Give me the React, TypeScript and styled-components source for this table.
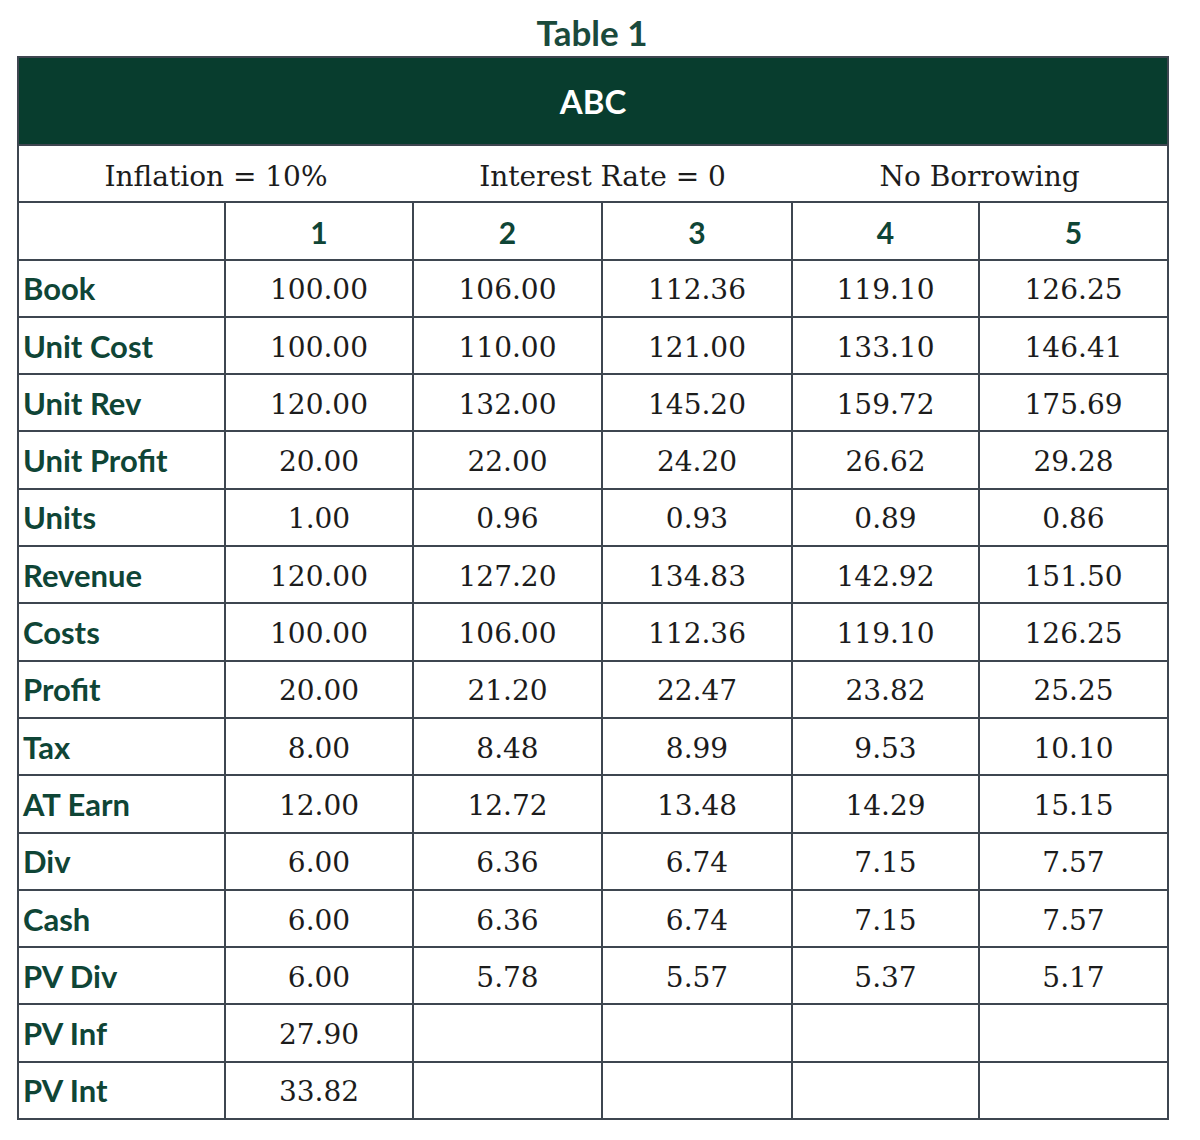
import React from "react";
import styled, { createGlobalStyle } from "styled-components";

const Global = createGlobalStyle`
  html, body { margin: 0; padding: 0; background: #ffffff; }
  body { font-family: "Lato", "Open Sans", sans-serif; }
`;

const Page = styled.div`
  width: 1200px;
  padding-left: 17px;
  box-sizing: border-box;
`;

const Frame = styled.div`
  width: 1150px;
`;

const Title = styled.div`
  height: 40px;
  padding-top: 12px;
  margin-bottom: 4px;
  text-align: center;
  font-family: "Lato", sans-serif;
  font-weight: 700;
  font-size: 35px;
  line-height: 40px;
  color: #1a4a3c;
`;

const Grid = styled.table`
  width: 1150px;
  border-collapse: collapse;
  table-layout: fixed;
  border: 2px solid #3e4650;
`;

const Col = styled.col<{ $w: number }>`
  width: ${(p) => p.$w}px;
`;

const BannerCell = styled.th`
  height: 86px;
  padding: 0;
  background: #083d2e;
  color: #ffffff;
  font-family: "Lato", sans-serif;
  font-weight: 700;
  font-size: 33px;
  text-align: center;
  vertical-align: middle;
  border: 2px solid #3e4650;
`;

const Row = styled.tr`
  height: 57.3px;
`;

const NoteCell = styled.td`
  padding: 5px 0 0;
  font-family: "DejaVu Serif", serif;
  font-size: 28px;
  color: #1c1c1c;
  text-align: center;
  vertical-align: middle;
  border-top: 2px solid #3e4650;
  border-bottom: 2px solid #3e4650;
`;

const HeadCell = styled.td`
  padding: 2px 0 0;
  font-family: "Lato", sans-serif;
  font-weight: 700;
  font-size: 30px;
  color: #0f4536;
  text-align: center;
  vertical-align: middle;
  border: 2px solid #3e4650;
`;

const LabelCell = styled.td`
  padding: 0 0 0 4px;
  font-family: "Lato", sans-serif;
  font-weight: 700;
  font-size: 31px;
  color: #0f4536;
  text-align: left;
  vertical-align: middle;
  white-space: nowrap;
  border: 2px solid #3e4650;
`;

const ValueCell = styled.td`
  padding: 3px 0 0;
  font-family: "DejaVu Serif", serif;
  font-size: 28px;
  color: #1c1c1c;
  text-align: center;
  vertical-align: middle;
  border: 2px solid #3e4650;
`;

const rows: [string, string[]][] = [
  ["Book", ["100.00", "106.00", "112.36", "119.10", "126.25"]],
  ["Unit Cost", ["100.00", "110.00", "121.00", "133.10", "146.41"]],
  ["Unit Rev", ["120.00", "132.00", "145.20", "159.72", "175.69"]],
  ["Unit Profit", ["20.00", "22.00", "24.20", "26.62", "29.28"]],
  ["Units", ["1.00", "0.96", "0.93", "0.89", "0.86"]],
  ["Revenue", ["120.00", "127.20", "134.83", "142.92", "151.50"]],
  ["Costs", ["100.00", "106.00", "112.36", "119.10", "126.25"]],
  ["Profit", ["20.00", "21.20", "22.47", "23.82", "25.25"]],
  ["Tax", ["8.00", "8.48", "8.99", "9.53", "10.10"]],
  ["AT Earn", ["12.00", "12.72", "13.48", "14.29", "15.15"]],
  ["Div", ["6.00", "6.36", "6.74", "7.15", "7.57"]],
  ["Cash", ["6.00", "6.36", "6.74", "7.15", "7.57"]],
  ["PV Div", ["6.00", "5.78", "5.57", "5.37", "5.17"]],
  ["PV Inf", ["27.90", "", "", "", ""]],
  ["PV Int", ["33.82", "", "", "", ""]],
];

const widths = [207, 188, 189, 190, 187, 189];

export default function App() {
  return (
    <Page>
      <Global />
      <Frame>
        <Title>Table 1</Title>
        <Grid>
          <colgroup>
            {widths.map((w, i) => (
              <Col key={i} $w={w} />
            ))}
          </colgroup>
          <thead>
            <tr>
              <BannerCell colSpan={6}>ABC</BannerCell>
            </tr>
          </thead>
          <tbody>
            <Row>
              <NoteCell colSpan={2}>Inflation = 10%</NoteCell>
              <NoteCell colSpan={2}>Interest Rate = 0</NoteCell>
              <NoteCell colSpan={2}>No Borrowing</NoteCell>
            </Row>
            <Row>
              <HeadCell />
              {[1, 2, 3, 4, 5].map((n) => (
                <HeadCell key={n}>{n}</HeadCell>
              ))}
            </Row>
            {rows.map(([label, vals]) => (
              <Row key={label}>
                <LabelCell>{label}</LabelCell>
                {vals.map((v, i) => (
                  <ValueCell key={i}>{v}</ValueCell>
                ))}
              </Row>
            ))}
          </tbody>
        </Grid>
      </Frame>
    </Page>
  );
}
